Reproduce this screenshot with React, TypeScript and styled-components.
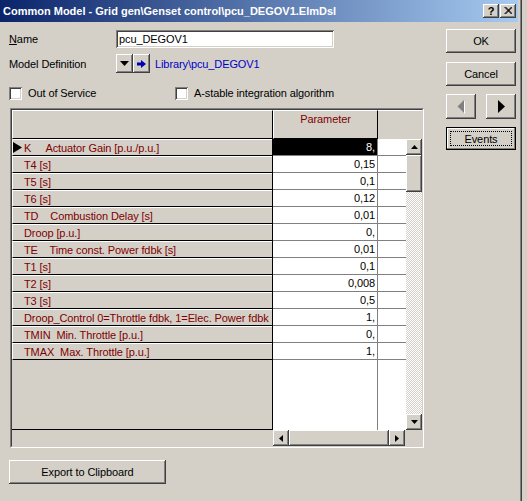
import React from "react";
import styled, { createGlobalStyle } from "styled-components";

const GlobalStyle = createGlobalStyle`
  html, body { margin: 0; padding: 0; background: #d4d0c8; }
  body { font-family: "Liberation Sans", Arial, sans-serif; font-size: 11px; }
  * { box-sizing: border-box; }
`;

const raised = `box-shadow: inset -1px -1px #404040, inset 1px 1px #ffffff, inset -2px -2px #808080, inset 2px 2px #d4d0c8;`;
const sunken = `box-shadow: inset 1px 1px #808080, inset -1px -1px #ffffff, inset 2px 2px #404040, inset -2px -2px #d4d0c8;`;

const Root = styled.div`
  width: 527px;
  height: 501px;
  background: #d4d0c8;
  overflow: hidden;
`;

const Window = styled.div`
  width: 522px;
  height: 501px;
  display: flex;
  flex-direction: column;
  background: #d4d0c8;
  box-shadow: inset -1px 0 #404040, inset -2px 0 #808080;
  color: #000;
  font-family: "Liberation Sans", Arial, sans-serif;
  font-size: 11px;
  letter-spacing: -0.1px;
`;

const TitleBar = styled.div`
  width: 518px;
  height: 22px;
  flex: none;
  display: flex;
  align-items: center;
  padding: 0 2px 0 3px;
  background: linear-gradient(to right, #0a246a, #a6caf0);
  color: #fff;
  font-weight: bold;
  font-size: 11px;
  letter-spacing: 0;
`;

const TitleText = styled.span`
  white-space: pre;
`;

const TitleButtons = styled.div`
  margin-left: auto;
  display: flex;
  gap: 1px;
`;

const TitleButton = styled.div`
  width: 16px;
  height: 14px;
  background: #d4d0c8;
  ${raised}
  display: flex;
  align-items: center;
  justify-content: center;
  color: #000;
  font-weight: bold;
  font-size: 11px;
  padding-bottom: 1px;
`;

const Body = styled.div`
  display: flex;
  flex: 1;
`;

const LeftCol = styled.div`
  width: 424px;
  flex: none;
  display: flex;
  flex-direction: column;
  padding: 8px 0 0 9px;
`;

const RightCol = styled.div`
  width: 70px;
  margin-left: 22px;
  display: flex;
  flex-direction: column;
  padding-top: 7px;
`;

const FormRow = styled.div<{ $h: number; $mt: number }>`
  display: flex;
  align-items: center;
  height: ${(p) => p.$h}px;
  margin-top: ${(p) => p.$mt}px;
`;

const Label = styled.span`
  width: 107px;
  flex: none;
  white-space: pre;
`;

const NameField = styled.input`
  width: 218px;
  height: 18px;
  border: none;
  outline: none;
  background: #fff;
  ${sunken}
  padding: 0 0 0 3px;
  margin: 0;
  font-family: inherit;
  font-size: 11px;
  letter-spacing: -0.1px;
  color: #000;
`;

const SmallButton = styled.div`
  width: 17px;
  height: 19px;
  background: #d4d0c8;
  ${raised}
  display: flex;
  align-items: center;
  justify-content: center;
`;

const LinkText = styled.span`
  margin-left: 5px;
  color: #0000c8;
`;

const CheckRow = styled.div`
  display: grid;
  grid-template-columns: 166px auto;
  height: 14px;
  margin-top: 13px;
  align-items: center;
`;

const CheckGroup = styled.div`
  display: flex;
  align-items: center;
`;

const CheckBox = styled.div`
  width: 13px;
  height: 13px;
  background: #fff;
  ${sunken}
`;

const CheckLabel = styled.span`
  margin-left: 6px;
`;

const TableFrame = styled.div`
  margin-top: 8px;
  margin-left: 1px;
  width: 414px;
  height: 340px;
  border: 1px solid;
  border-color: #808080 #ffffff #ffffff #808080;
`;

const TableInner = styled.div`
  width: 100%;
  height: 100%;
  border: 1px solid;
  border-color: #404040 #d4d0c8 #d4d0c8 #404040;
  display: flex;
  flex-direction: column;
`;

const HeaderRow = styled.div`
  display: flex;
  height: 29px;
  flex: none;
`;

const HeaderCell = styled.div<{ $w: number }>`
  width: ${(p) => p.$w}px;
  height: 29px;
  border-top: 1px solid #fff;
  border-left: 1px solid #fff;
  border-bottom: 1px solid #000;
  border-right: 1px solid #000;
  color: #800000;
  text-align: center;
  padding-top: 2px;
`;

const HeaderFill = styled.div`
  flex: 1;
  border-top: 1px solid #fff;
`;

const BodyArea = styled.div`
  display: flex;
  height: 291px;
  flex: none;
`;

const RowHeaders = styled.div`
  width: 261px;
  flex: none;
  display: flex;
  flex-direction: column;
  border-right: 1px solid #000;
  border-bottom: 1px solid #000;
`;

const RowHead = styled.div`
  height: 17px;
  flex: none;
  display: flex;
  align-items: center;
  border-top: 1px solid #fff;
  border-left: 1px solid #fff;
  border-bottom: 1px solid #000;
  color: #800000;
  white-space: pre;
  overflow: hidden;
`;

const Indicator = styled.span`
  width: 11px;
  flex: none;
  display: flex;
  align-items: center;
`;

const Values = styled.div`
  width: 133px;
  flex: none;
  display: flex;
  flex-direction: column;
  background: linear-gradient(
    to right,
    #fff 0,
    #fff 104px,
    #808080 104px,
    #808080 105px,
    #fff 105px
  );
`;

const ValueRow = styled.div`
  height: 17px;
  flex: none;
  display: flex;
  border-bottom: 1px solid #808080;
`;

const ValueCell = styled.div<{ $sel?: boolean }>`
  width: 104px;
  height: 16px;
  line-height: 16px;
  text-align: right;
  padding-right: 2px;
  background: ${(p) => (p.$sel ? "#000" : "transparent")};
  color: ${(p) => (p.$sel ? "#fff" : "#000")};
`;

const VScroll = styled.div`
  width: 16px;
  flex: none;
  display: flex;
  flex-direction: column;
`;

const ScrollBtn = styled.div`
  width: 16px;
  height: 16px;
  flex: none;
  background: #d4d0c8;
  ${raised}
  display: flex;
  align-items: center;
  justify-content: center;
`;

const Thumb = styled.div<{ $w: number; $h: number }>`
  width: ${(p) => p.$w}px;
  height: ${(p) => p.$h}px;
  flex: none;
  background: #d4d0c8;
  ${raised}
`;

const Track = styled.div`
  flex: 1;
  background: repeating-conic-gradient(#d4d0c8 0% 25%, #ffffff 0% 50%) 0 0 / 2px 2px;
`;

const FooterRow = styled.div`
  display: flex;
  height: 16px;
  flex: none;
`;

const FooterBlank = styled.div`
  width: 261px;
  flex: none;
`;

const HScroll = styled.div`
  width: 132px;
  flex: none;
  display: flex;
`;

const Corner = styled.div`
  flex: 1;
`;

const Button = styled.div<{ $w: number; $h: number; $mt: number }>`
  width: ${(p) => p.$w}px;
  height: ${(p) => p.$h}px;
  margin-top: ${(p) => p.$mt}px;
  flex: none;
  background: #d4d0c8;
  ${raised}
  display: flex;
  align-items: center;
  justify-content: center;
  color: #000;
`;

const DefaultButton = styled.div`
  width: 70px;
  height: 23px;
  margin-top: 8px;
  border: 1px solid #000;
  background: #d4d0c8;
  box-shadow: inset -1px -1px #808080, inset 1px 1px #ffffff;
  padding: 3px;
  display: flex;
`;

const FocusRing = styled.div`
  flex: 1;
  border: 1px dotted #000;
  display: flex;
  align-items: center;
  justify-content: center;
`;

const ArrowRow = styled.div`
  display: flex;
  justify-content: space-between;
  margin-top: 8px;
`;

type Dir = "up" | "down" | "left" | "right";

const Tri = ({ dir, w, h, color = "#000" }: { dir: Dir; w: number; h: number; color?: string }) => {
  const pts =
    dir === "up"
      ? `0,${h} ${w},${h} ${w / 2},0`
      : dir === "down"
      ? `0,0 ${w},0 ${w / 2},${h}`
      : dir === "left"
      ? `${w},0 ${w},${h} 0,${h / 2}`
      : `0,0 0,${h} ${w},${h / 2}`;
  return (
    <svg width={w} height={h} viewBox={`0 0 ${w} ${h}`} style={{ display: "block" }}>
      <polygon points={pts} fill={color} />
    </svg>
  );
};

const DisabledLeft = () => (
  <svg width={9} height={14} viewBox="0 0 9 14" style={{ display: "block" }}>
    <polygon points="8,1 8,14 1.5,7.5" fill="#ffffff" />
    <polygon points="7,0 7,13 0.5,6.5" fill="#808080" />
  </svg>
);

const BlueArrow = () => (
  <svg width={9} height={8} viewBox="0 0 9 8" style={{ display: "block" }}>
    <rect x="0" y="2.5" width="4.5" height="3" fill="#0000b0" />
    <polygon points="4,0 9,4 4,8" fill="#0000b0" />
  </svg>
);

const CloseGlyph = () => (
  <svg width={8} height={7} viewBox="0 0 8 7" style={{ display: "block" }}>
    <path d="M0.5 0 L7.5 7 M1.5 0 L8.5 7 M7.5 0 L0.5 7 M8.5 0 L1.5 7" stroke="#000" strokeWidth="1" />
  </svg>
);

type Row = { label: string; value: string };

const rows: Row[] = [
  { label: "K     Actuator Gain [p.u./p.u.]", value: "8," },
  { label: "T4 [s]", value: "0,15" },
  { label: "T5 [s]", value: "0,1" },
  { label: "T6 [s]", value: "0,12" },
  { label: "TD    Combustion Delay [s]", value: "0,01" },
  { label: "Droop [p.u.]", value: "0," },
  { label: "TE    Time const. Power fdbk [s]", value: "0,01" },
  { label: "T1 [s]", value: "0,1" },
  { label: "T2 [s]", value: "0,008" },
  { label: "T3 [s]", value: "0,5" },
  { label: "Droop_Control 0=Throttle fdbk, 1=Elec. Power fdbk", value: "1," },
  { label: "TMIN  Min. Throttle [p.u.]", value: "0," },
  { label: "TMAX  Max. Throttle [p.u.]", value: "1," },
];

export default function App() {
  return (
    <Root>
      <GlobalStyle />
      <Window>
        <TitleBar>
          <TitleText>Common Model - Grid gen\Genset control\pcu_DEGOV1.ElmDsl</TitleText>
          <TitleButtons>
            <TitleButton>?</TitleButton>
            <TitleButton>
              <CloseGlyph />
            </TitleButton>
          </TitleButtons>
        </TitleBar>
        <Body>
          <LeftCol>
            <FormRow $h={18} $mt={0}>
              <Label>
                <u>N</u>ame
              </Label>
              <NameField value="pcu_DEGOV1" readOnly />
            </FormRow>
            <FormRow $h={19} $mt={6}>
              <Label>Model Definition</Label>
              <SmallButton>
                <Tri dir="down" w={9} h={5} />
              </SmallButton>
              <SmallButton>
                <BlueArrow />
              </SmallButton>
              <LinkText>Library\pcu_DEGOV1</LinkText>
            </FormRow>
            <CheckRow>
              <CheckGroup>
                <CheckBox />
                <CheckLabel>Out of Service</CheckLabel>
              </CheckGroup>
              <CheckGroup>
                <CheckBox />
                <CheckLabel>A-stable integration algorithm</CheckLabel>
              </CheckGroup>
            </CheckRow>
            <TableFrame>
              <TableInner>
                <HeaderRow>
                  <HeaderCell $w={261} />
                  <HeaderCell $w={105}>Parameter</HeaderCell>
                  <HeaderFill />
                </HeaderRow>
                <BodyArea>
                  <RowHeaders>
                    {rows.map((r, i) => (
                      <RowHead key={i}>
                        <Indicator>{i === 0 && <Tri dir="right" w={9} h={11} />}</Indicator>
                        {r.label}
                      </RowHead>
                    ))}
                  </RowHeaders>
                  <Values>
                    {rows.map((r, i) => (
                      <ValueRow key={i}>
                        <ValueCell $sel={i === 0}>{r.value}</ValueCell>
                      </ValueRow>
                    ))}
                  </Values>
                  <VScroll>
                    <ScrollBtn>
                      <Tri dir="up" w={7} h={4} />
                    </ScrollBtn>
                    <Thumb $w={16} $h={37} />
                    <Track />
                    <ScrollBtn>
                      <Tri dir="down" w={7} h={4} />
                    </ScrollBtn>
                  </VScroll>
                </BodyArea>
                <FooterRow>
                  <FooterBlank />
                  <HScroll>
                    <ScrollBtn>
                      <Tri dir="left" w={4} h={7} />
                    </ScrollBtn>
                    <Thumb $w={100} $h={16} />
                    <ScrollBtn>
                      <Tri dir="right" w={4} h={7} />
                    </ScrollBtn>
                  </HScroll>
                  <Corner />
                </FooterRow>
              </TableInner>
            </TableFrame>
            <Button $w={157} $h={24} $mt={12}>
              Export to Clipboard
            </Button>
          </LeftCol>
          <RightCol>
            <Button $w={70} $h={24} $mt={0}>
              OK
            </Button>
            <Button $w={70} $h={24} $mt={9}>
              Cancel
            </Button>
            <ArrowRow>
              <Button $w={30} $h={25} $mt={0}>
                <DisabledLeft />
              </Button>
              <Button $w={30} $h={25} $mt={0}>
                <Tri dir="right" w={7} h={13} />
              </Button>
            </ArrowRow>
            <DefaultButton>
              <FocusRing>Events</FocusRing>
            </DefaultButton>
          </RightCol>
        </Body>
      </Window>
    </Root>
  );
}
